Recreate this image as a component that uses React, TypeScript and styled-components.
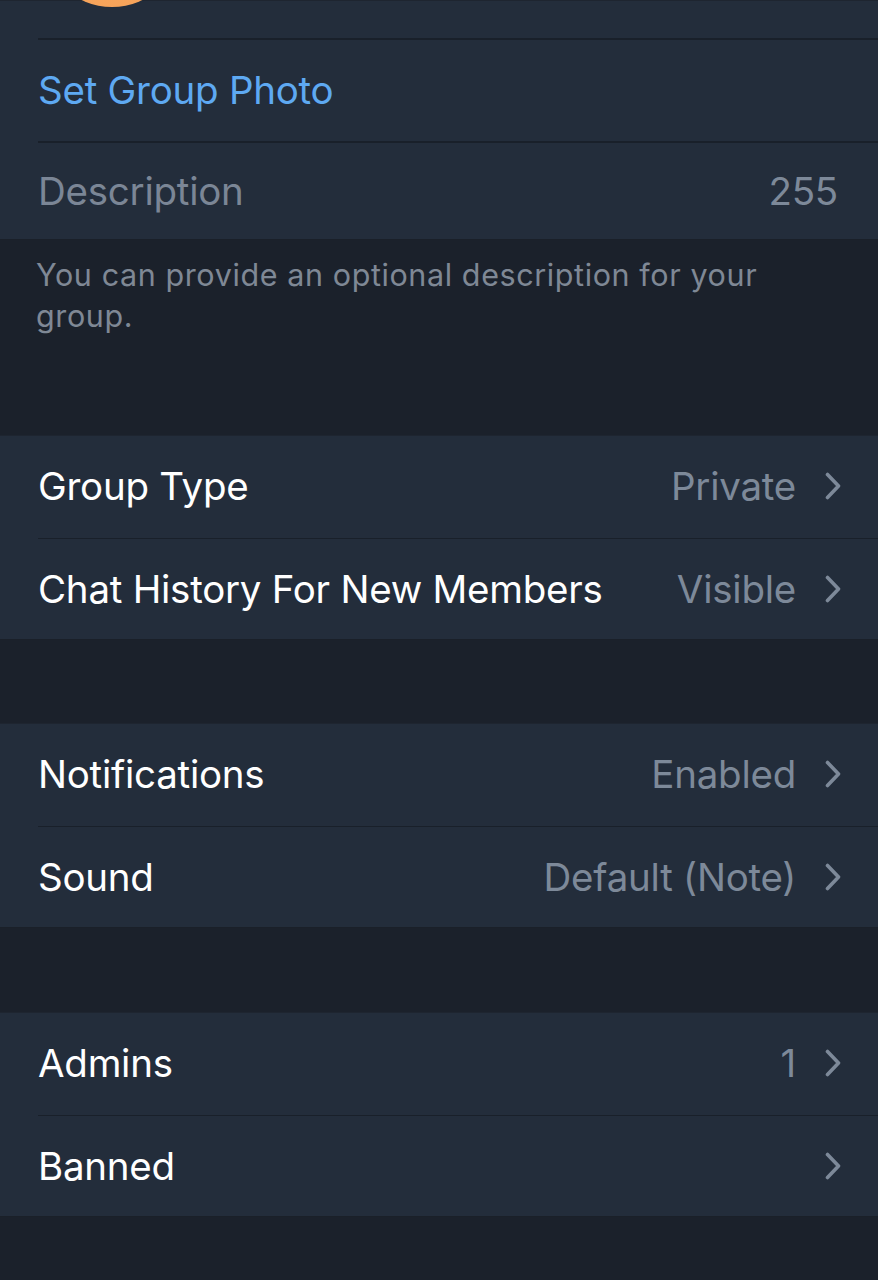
import React from "react"
import styled, { createGlobalStyle } from "styled-components"

const GlobalStyle = createGlobalStyle`
  html, body {
    margin: 0;
    padding: 0;
    background: #1b212b;
  }
  body {
    font-family: Inter, "Noto Sans", "Liberation Sans", sans-serif;
    -webkit-font-smoothing: antialiased;
  }
`

const Screen = styled.div`
  width: 878px;
  height: 1280px;
  overflow: hidden;
  background: #1b212b;
`

const Section = styled.div`
  background: #232d3b;
  box-shadow: inset 0 1px 0 #1e2530, inset 0 -1px 0 #1a2029;
`

const TopArea = styled.div`
  position: relative;
  height: 38px;
  overflow: hidden;
`

const Avatar = styled.div`
  position: absolute;
  left: 42px;
  bottom: 31px;
  width: 140px;
  height: 140px;
  border-radius: 50%;
  background: linear-gradient(180deg, #f9b36c 0%, #f6a35a 100%);
`

const Row = styled.div<{ $divider?: boolean; $h?: number }>`
  position: relative;
  height: ${p => p.$h ?? 102.5}px;
  display: flex;
  align-items: center;
  padding: 0 40px 0 38px;
  box-sizing: border-box;

  &::before {
    content: "";
    display: ${p => (p.$divider ? "block" : "none")};
    position: absolute;
    top: 0;
    left: 38px;
    right: 0;
    height: 1.5px;
    background: #19202a;
  }
`

const Label = styled.span<{ $tone?: "blue" | "muted" | "plain" }>`
  flex: 1;
  font-size: 38.5px;
  letter-spacing: -0.25px;
  color: ${p =>
    p.$tone === "blue" ? "#5ea9f2" : p.$tone === "muted" ? "#7b8696" : "#ffffff"};
  white-space: nowrap;
`

const Value = styled.span`
  font-size: 38.5px;
  letter-spacing: -0.25px;
  color: #7d8999;
  white-space: nowrap;
`

const Chevron = styled.svg`
  width: 18px;
  height: 28px;
  margin-left: 28px;
  margin-right: -4px;
  flex: none;
`

const Footer = styled.div`
  padding: 14px 60px 0 36px;
  height: 195px;
  box-sizing: border-box;
  font-size: 30.5px;
  line-height: 41px;
  letter-spacing: 0.6px;
  color: #7f8895;
`

const Gap = styled.div<{ $h: number }>`
  height: ${p => p.$h}px;
`

const Arrow = () => (
  <Chevron viewBox="0 0 18 28">
    <path
      d="M3.5 2.5 L14.5 14 L3.5 25.5"
      fill="none"
      stroke="#7d8999"
      strokeWidth="3.6"
      strokeLinecap="round"
      strokeLinejoin="round"
    />
  </Chevron>
)

type Item = { label: string; value?: string }

const Group = ({ items }: { items: Item[] }) => (
  <Section>
    {items.map((it, i) => (
      <Row key={it.label} $divider={i > 0}>
        <Label>{it.label}</Label>
        {it.value && <Value>{it.value}</Value>}
        <Arrow />
      </Row>
    ))}
  </Section>
)

export default function App() {
  return (
    <Screen>
      <GlobalStyle />
      <Section>
        <TopArea>
          <Avatar />
        </TopArea>
        <Row $divider $h={103}>
          <Label $tone="blue">Set Group Photo</Label>
        </Row>
        <Row $divider $h={99}>
          <Label $tone="muted">Description</Label>
          <Value>255</Value>
        </Row>
      </Section>
      <Footer>You can provide an optional description for your group.</Footer>
      <Group
        items={[
          { label: "Group Type", value: "Private" },
          { label: "Chat History For New Members", value: "Visible" },
        ]}
      />
      <Gap $h={83} />
      <Group
        items={[
          { label: "Notifications", value: "Enabled" },
          { label: "Sound", value: "Default (Note)" },
        ]}
      />
      <Gap $h={84} />
      <Group
        items={[
          { label: "Admins", value: "1" },
          { label: "Banned" },
        ]}
      />
    </Screen>
  )
}
